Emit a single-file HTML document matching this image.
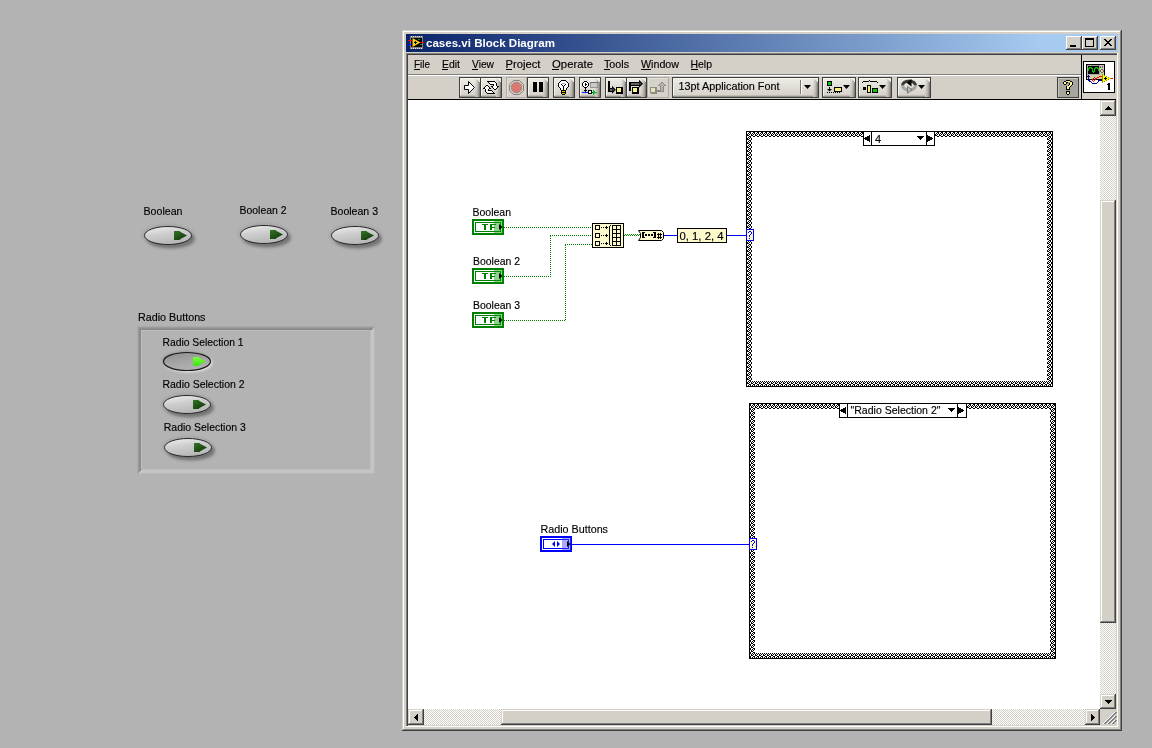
<!DOCTYPE html>
<html><head><meta charset="utf-8">
<style>
html,body{margin:0;padding:0;}
body{width:1152px;height:748px;overflow:hidden;background:#b3b3b3;}
svg{position:absolute;left:0;top:0;display:block;will-change:transform;}
text{font-family:"Liberation Sans",sans-serif;white-space:pre;}
</style></head><body>
<svg width="1152" height="748" viewBox="0 0 1152 748" shape-rendering="crispEdges">
<rect x="0" y="0" width="1152" height="748" fill="#b3b3b3"/>
<defs>
<linearGradient id="tg" gradientUnits="userSpaceOnUse" x1="406" x2="1040" y1="0" y2="0"><stop offset="0" stop-color="#0a246a"/><stop offset="1" stop-color="#a6caf0"/></linearGradient>
<pattern id="chk" x="0" y="0" width="2" height="2" patternUnits="userSpaceOnUse"><rect width="2" height="2" fill="#fff"/><rect width="1" height="1" fill="#d4d0c8"/><rect x="1" y="1" width="1" height="1" fill="#d4d0c8"/></pattern>
<linearGradient id="btng" x1="0" x2="0" y1="0" y2="1"><stop offset="0" stop-color="#eeece6"/><stop offset="0.5" stop-color="#e0ddd6"/><stop offset="1" stop-color="#d4d0c8"/></linearGradient>
</defs>
<rect x="402" y="30" width="720" height="701" fill="#d4d0c8" />
<rect x="403" y="31" width="717" height="1" fill="#fff" />
<rect x="403" y="31" width="1" height="698" fill="#fff" />
<rect x="1120" y="31" width="1" height="699" fill="#808080" />
<rect x="403" y="729" width="718" height="1" fill="#808080" />
<rect x="1121" y="30" width="1" height="701" fill="#404040" />
<rect x="402" y="730" width="720" height="1" fill="#404040" />
<rect x="406" y="34" width="712" height="18" fill="url(#tg)" />
<text x="426" y="47" font-size="11" fill="#fff" font-weight="bold" textLength="129" lengthAdjust="spacingAndGlyphs" >cases.vi Block Diagram</text>
<rect x="1066" y="36" width="16" height="14" fill="#404040" />
<rect x="1066" y="36" width="15" height="13" fill="#fff" />
<rect x="1067" y="37" width="14" height="12" fill="#808080" />
<rect x="1067" y="37" width="13" height="11" fill="#d4d0c8" />
<rect x="1082" y="36" width="16" height="14" fill="#404040" />
<rect x="1082" y="36" width="15" height="13" fill="#fff" />
<rect x="1083" y="37" width="14" height="12" fill="#808080" />
<rect x="1083" y="37" width="13" height="11" fill="#d4d0c8" />
<rect x="1100" y="36" width="16" height="14" fill="#404040" />
<rect x="1100" y="36" width="15" height="13" fill="#fff" />
<rect x="1101" y="37" width="14" height="12" fill="#808080" />
<rect x="1101" y="37" width="13" height="11" fill="#d4d0c8" />
<rect x="1070" y="45" width="6" height="2" fill="#000" />
<rect x="1085" y="38" width="9" height="9" fill="#000" />
<rect x="1086" y="40" width="7" height="6" fill="#d4d0c8" />
<rect x="1104" y="39" width="2" height="1" fill="#000" />
<rect x="1110" y="39" width="2" height="1" fill="#000" />
<rect x="1105" y="40" width="2" height="1" fill="#000" />
<rect x="1109" y="40" width="2" height="1" fill="#000" />
<rect x="1106" y="41" width="4" height="1" fill="#000" />
<rect x="1107" y="42" width="2" height="1" fill="#000" />
<rect x="1106" y="43" width="4" height="1" fill="#000" />
<rect x="1105" y="44" width="2" height="1" fill="#000" />
<rect x="1109" y="44" width="2" height="1" fill="#000" />
<rect x="1104" y="45" width="2" height="1" fill="#000" />
<rect x="1110" y="45" width="2" height="1" fill="#000" />
<rect x="406" y="53" width="712" height="1" fill="#808080" />
<rect x="406" y="53" width="1" height="674" fill="#808080" />
<rect x="407" y="54" width="710" height="1" fill="#404040" />
<rect x="407" y="54" width="1" height="672" fill="#404040" />
<rect x="1117" y="53" width="1" height="674" fill="#fff" />
<rect x="406" y="726" width="712" height="1" fill="#fff" />
<rect x="408" y="74" width="673" height="1" fill="#808080" />
<rect x="408" y="75" width="673" height="1" fill="#fff" />
<rect x="1081" y="55" width="1" height="44" fill="#000" />
<text x="414" y="68" font-size="11" fill="#000" font-weight="normal" textLength="16" lengthAdjust="spacingAndGlyphs" stroke="#000" stroke-width="0.15" >File</text>
<text x="442" y="68" font-size="11" fill="#000" font-weight="normal" textLength="18" lengthAdjust="spacingAndGlyphs" stroke="#000" stroke-width="0.15" >Edit</text>
<text x="472" y="68" font-size="11" fill="#000" font-weight="normal" textLength="22" lengthAdjust="spacingAndGlyphs" stroke="#000" stroke-width="0.15" >View</text>
<text x="505.5" y="68" font-size="11" fill="#000" font-weight="normal" textLength="35" lengthAdjust="spacingAndGlyphs" stroke="#000" stroke-width="0.15" >Project</text>
<text x="552" y="68" font-size="11" fill="#000" font-weight="normal" textLength="41" lengthAdjust="spacingAndGlyphs" stroke="#000" stroke-width="0.15" >Operate</text>
<text x="604" y="68" font-size="11" fill="#000" font-weight="normal" textLength="25" lengthAdjust="spacingAndGlyphs" stroke="#000" stroke-width="0.15" >Tools</text>
<text x="641" y="68" font-size="11" fill="#000" font-weight="normal" textLength="38" lengthAdjust="spacingAndGlyphs" stroke="#000" stroke-width="0.15" >Window</text>
<text x="690.5" y="68" font-size="11" fill="#000" font-weight="normal" textLength="21.5" lengthAdjust="spacingAndGlyphs" stroke="#000" stroke-width="0.15" >Help</text>
<rect x="414" y="69" width="6" height="1" fill="#000" />
<rect x="442" y="69" width="6" height="1" fill="#000" />
<rect x="472" y="69" width="6" height="1" fill="#000" />
<rect x="506" y="69" width="6" height="1" fill="#000" />
<rect x="552" y="69" width="7" height="1" fill="#000" />
<rect x="604" y="69" width="6" height="1" fill="#000" />
<rect x="641" y="69" width="10" height="1" fill="#000" />
<rect x="691" y="69" width="7" height="1" fill="#000" />
<rect x="459" y="77" width="22" height="21" fill="#404040" />
<rect x="460" y="78" width="20" height="19" fill="url(#btng)" />
<rect x="460" y="78" width="19" height="1" fill="#f6f4ee" />
<rect x="460" y="78" width="1" height="18" fill="#f6f4ee" />
<rect x="475" y="78" width="1" height="19" fill="#000" opacity="0.04"/>
<rect x="476" y="79" width="1" height="18" fill="#000" opacity="0.09"/>
<rect x="477" y="80" width="1" height="17" fill="#000" opacity="0.16"/>
<rect x="478" y="81" width="1" height="16" fill="#000" opacity="0.26"/>
<rect x="479" y="82" width="1" height="15" fill="#000" opacity="0.42"/>
<rect x="460" y="95" width="15" height="1" fill="#000" opacity="0.10"/>
<rect x="460" y="96" width="15" height="1" fill="#000" opacity="0.30"/>
<rect x="480" y="77" width="22" height="21" fill="#404040" />
<rect x="481" y="78" width="20" height="19" fill="url(#btng)" />
<rect x="481" y="78" width="19" height="1" fill="#f6f4ee" />
<rect x="481" y="78" width="1" height="18" fill="#f6f4ee" />
<rect x="496" y="78" width="1" height="19" fill="#000" opacity="0.04"/>
<rect x="497" y="79" width="1" height="18" fill="#000" opacity="0.09"/>
<rect x="498" y="80" width="1" height="17" fill="#000" opacity="0.16"/>
<rect x="499" y="81" width="1" height="16" fill="#000" opacity="0.26"/>
<rect x="500" y="82" width="1" height="15" fill="#000" opacity="0.42"/>
<rect x="481" y="95" width="15" height="1" fill="#000" opacity="0.10"/>
<rect x="481" y="96" width="15" height="1" fill="#000" opacity="0.30"/>
<rect x="506" y="77" width="21" height="21" fill="#aeaaa2" />
<rect x="507" y="78" width="19" height="19" fill="#d6d2ca" />
<rect x="507" y="78" width="19" height="1" fill="#e2dfd8" />
<rect x="507" y="78" width="1" height="19" fill="#e2dfd8" />
<rect x="527" y="77" width="22" height="21" fill="#404040" />
<rect x="528" y="78" width="20" height="19" fill="url(#btng)" />
<rect x="528" y="78" width="19" height="1" fill="#f6f4ee" />
<rect x="528" y="78" width="1" height="18" fill="#f6f4ee" />
<rect x="543" y="78" width="1" height="19" fill="#000" opacity="0.04"/>
<rect x="544" y="79" width="1" height="18" fill="#000" opacity="0.09"/>
<rect x="545" y="80" width="1" height="17" fill="#000" opacity="0.16"/>
<rect x="546" y="81" width="1" height="16" fill="#000" opacity="0.26"/>
<rect x="547" y="82" width="1" height="15" fill="#000" opacity="0.42"/>
<rect x="528" y="95" width="15" height="1" fill="#000" opacity="0.10"/>
<rect x="528" y="96" width="15" height="1" fill="#000" opacity="0.30"/>
<rect x="553" y="77" width="22" height="21" fill="#404040" />
<rect x="554" y="78" width="20" height="19" fill="url(#btng)" />
<rect x="554" y="78" width="19" height="1" fill="#f6f4ee" />
<rect x="554" y="78" width="1" height="18" fill="#f6f4ee" />
<rect x="569" y="78" width="1" height="19" fill="#000" opacity="0.04"/>
<rect x="570" y="79" width="1" height="18" fill="#000" opacity="0.09"/>
<rect x="571" y="80" width="1" height="17" fill="#000" opacity="0.16"/>
<rect x="572" y="81" width="1" height="16" fill="#000" opacity="0.26"/>
<rect x="573" y="82" width="1" height="15" fill="#000" opacity="0.42"/>
<rect x="554" y="95" width="15" height="1" fill="#000" opacity="0.10"/>
<rect x="554" y="96" width="15" height="1" fill="#000" opacity="0.30"/>
<rect x="579" y="77" width="22" height="21" fill="#404040" />
<rect x="580" y="78" width="20" height="19" fill="url(#btng)" />
<rect x="580" y="78" width="19" height="1" fill="#f6f4ee" />
<rect x="580" y="78" width="1" height="18" fill="#f6f4ee" />
<rect x="595" y="78" width="1" height="19" fill="#000" opacity="0.04"/>
<rect x="596" y="79" width="1" height="18" fill="#000" opacity="0.09"/>
<rect x="597" y="80" width="1" height="17" fill="#000" opacity="0.16"/>
<rect x="598" y="81" width="1" height="16" fill="#000" opacity="0.26"/>
<rect x="599" y="82" width="1" height="15" fill="#000" opacity="0.42"/>
<rect x="580" y="95" width="15" height="1" fill="#000" opacity="0.10"/>
<rect x="580" y="96" width="15" height="1" fill="#000" opacity="0.30"/>
<rect x="605" y="77" width="22" height="21" fill="#404040" />
<rect x="606" y="78" width="20" height="19" fill="url(#btng)" />
<rect x="606" y="78" width="19" height="1" fill="#f6f4ee" />
<rect x="606" y="78" width="1" height="18" fill="#f6f4ee" />
<rect x="621" y="78" width="1" height="19" fill="#000" opacity="0.04"/>
<rect x="622" y="79" width="1" height="18" fill="#000" opacity="0.09"/>
<rect x="623" y="80" width="1" height="17" fill="#000" opacity="0.16"/>
<rect x="624" y="81" width="1" height="16" fill="#000" opacity="0.26"/>
<rect x="625" y="82" width="1" height="15" fill="#000" opacity="0.42"/>
<rect x="606" y="95" width="15" height="1" fill="#000" opacity="0.10"/>
<rect x="606" y="96" width="15" height="1" fill="#000" opacity="0.30"/>
<rect x="626" y="77" width="21" height="21" fill="#404040" />
<rect x="627" y="78" width="19" height="19" fill="url(#btng)" />
<rect x="627" y="78" width="18" height="1" fill="#f6f4ee" />
<rect x="627" y="78" width="1" height="18" fill="#f6f4ee" />
<rect x="641" y="78" width="1" height="19" fill="#000" opacity="0.04"/>
<rect x="642" y="79" width="1" height="18" fill="#000" opacity="0.09"/>
<rect x="643" y="80" width="1" height="17" fill="#000" opacity="0.16"/>
<rect x="644" y="81" width="1" height="16" fill="#000" opacity="0.26"/>
<rect x="645" y="82" width="1" height="15" fill="#000" opacity="0.42"/>
<rect x="627" y="95" width="14" height="1" fill="#000" opacity="0.10"/>
<rect x="627" y="96" width="14" height="1" fill="#000" opacity="0.30"/>
<rect x="647" y="77" width="22" height="21" fill="#aeaaa2" />
<rect x="648" y="78" width="20" height="19" fill="#d6d2ca" />
<rect x="648" y="78" width="20" height="1" fill="#e2dfd8" />
<rect x="648" y="78" width="1" height="19" fill="#e2dfd8" />
<rect x="672" y="77" width="147" height="21" fill="#404040" />
<rect x="673" y="78" width="145" height="19" fill="url(#btng)" />
<rect x="673" y="78" width="144" height="1" fill="#f6f4ee" />
<rect x="673" y="78" width="1" height="18" fill="#f6f4ee" />
<rect x="813" y="78" width="1" height="19" fill="#000" opacity="0.04"/>
<rect x="814" y="79" width="1" height="18" fill="#000" opacity="0.09"/>
<rect x="815" y="80" width="1" height="17" fill="#000" opacity="0.16"/>
<rect x="816" y="81" width="1" height="16" fill="#000" opacity="0.26"/>
<rect x="817" y="82" width="1" height="15" fill="#000" opacity="0.42"/>
<rect x="673" y="95" width="140" height="1" fill="#000" opacity="0.10"/>
<rect x="673" y="96" width="140" height="1" fill="#000" opacity="0.30"/>
<rect x="822" y="77" width="34" height="21" fill="#404040" />
<rect x="823" y="78" width="32" height="19" fill="url(#btng)" />
<rect x="823" y="78" width="31" height="1" fill="#f6f4ee" />
<rect x="823" y="78" width="1" height="18" fill="#f6f4ee" />
<rect x="850" y="78" width="1" height="19" fill="#000" opacity="0.04"/>
<rect x="851" y="79" width="1" height="18" fill="#000" opacity="0.09"/>
<rect x="852" y="80" width="1" height="17" fill="#000" opacity="0.16"/>
<rect x="853" y="81" width="1" height="16" fill="#000" opacity="0.26"/>
<rect x="854" y="82" width="1" height="15" fill="#000" opacity="0.42"/>
<rect x="823" y="95" width="27" height="1" fill="#000" opacity="0.10"/>
<rect x="823" y="96" width="27" height="1" fill="#000" opacity="0.30"/>
<rect x="858" y="77" width="34" height="21" fill="#404040" />
<rect x="859" y="78" width="32" height="19" fill="url(#btng)" />
<rect x="859" y="78" width="31" height="1" fill="#f6f4ee" />
<rect x="859" y="78" width="1" height="18" fill="#f6f4ee" />
<rect x="886" y="78" width="1" height="19" fill="#000" opacity="0.04"/>
<rect x="887" y="79" width="1" height="18" fill="#000" opacity="0.09"/>
<rect x="888" y="80" width="1" height="17" fill="#000" opacity="0.16"/>
<rect x="889" y="81" width="1" height="16" fill="#000" opacity="0.26"/>
<rect x="890" y="82" width="1" height="15" fill="#000" opacity="0.42"/>
<rect x="859" y="95" width="27" height="1" fill="#000" opacity="0.10"/>
<rect x="859" y="96" width="27" height="1" fill="#000" opacity="0.30"/>
<rect x="897" y="77" width="34" height="21" fill="#404040" />
<rect x="898" y="78" width="32" height="19" fill="url(#btng)" />
<rect x="898" y="78" width="31" height="1" fill="#f6f4ee" />
<rect x="898" y="78" width="1" height="18" fill="#f6f4ee" />
<rect x="925" y="78" width="1" height="19" fill="#000" opacity="0.04"/>
<rect x="926" y="79" width="1" height="18" fill="#000" opacity="0.09"/>
<rect x="927" y="80" width="1" height="17" fill="#000" opacity="0.16"/>
<rect x="928" y="81" width="1" height="16" fill="#000" opacity="0.26"/>
<rect x="929" y="82" width="1" height="15" fill="#000" opacity="0.42"/>
<rect x="898" y="95" width="27" height="1" fill="#000" opacity="0.10"/>
<rect x="898" y="96" width="27" height="1" fill="#000" opacity="0.30"/>
<text x="678.5" y="90" font-size="11" fill="#000" font-weight="normal" textLength="101" lengthAdjust="spacingAndGlyphs" stroke="#000" stroke-width="0.15" >13pt Application Font</text>
<rect x="800" y="80" width="1" height="14" fill="#7a7770" />
<rect x="801" y="80" width="1" height="14" fill="#fff" />
<path d="M804,85 h7 l-3.5,4 z" fill="#000" stroke="none" stroke-width="1" shape-rendering="geometricPrecision"/>
<rect x="1057" y="77" width="22" height="21" fill="#404040" />
<rect x="1058" y="78" width="20" height="19" fill="#a8a5a0" />
<rect x="1058" y="78" width="20" height="1" fill="#c8c5c0" />
<rect x="1058" y="78" width="1" height="19" fill="#c8c5c0" />
<rect x="1083" y="61" width="32" height="32" fill="#000" />
<rect x="1084" y="62" width="30" height="30" fill="#fff" />
<rect x="408" y="100" width="692" height="609" fill="#fff" />
<rect x="408" y="99" width="708" height="1" fill="#000" />
<rect x="1100" y="100" width="16" height="609" fill="url(#chk)" />
<rect x="408" y="709" width="692" height="16" fill="url(#chk)" />
<rect x="1100" y="709" width="16" height="16" fill="#d4d0c8" />
<rect x="1100" y="100" width="16" height="16" fill="#404040" />
<rect x="1100" y="100" width="15" height="15" fill="#d4d0c8" />
<rect x="1101" y="101" width="14" height="14" fill="#808080" />
<rect x="1101" y="101" width="13" height="13" fill="#fff" />
<rect x="1102" y="102" width="12" height="12" fill="#d4d0c8" />
<rect x="1100" y="694" width="16" height="15" fill="#404040" />
<rect x="1100" y="694" width="15" height="14" fill="#d4d0c8" />
<rect x="1101" y="695" width="14" height="13" fill="#808080" />
<rect x="1101" y="695" width="13" height="12" fill="#fff" />
<rect x="1102" y="696" width="12" height="11" fill="#d4d0c8" />
<rect x="408" y="709" width="16" height="16" fill="#404040" />
<rect x="408" y="709" width="15" height="15" fill="#d4d0c8" />
<rect x="409" y="710" width="14" height="14" fill="#808080" />
<rect x="409" y="710" width="13" height="13" fill="#fff" />
<rect x="410" y="711" width="12" height="12" fill="#d4d0c8" />
<rect x="1085" y="709" width="15" height="16" fill="#404040" />
<rect x="1085" y="709" width="14" height="15" fill="#d4d0c8" />
<rect x="1086" y="710" width="13" height="14" fill="#808080" />
<rect x="1086" y="710" width="12" height="13" fill="#fff" />
<rect x="1087" y="711" width="11" height="12" fill="#d4d0c8" />
<rect x="1100" y="200" width="16" height="423" fill="#404040" />
<rect x="1100" y="200" width="15" height="422" fill="#d4d0c8" />
<rect x="1101" y="201" width="14" height="421" fill="#808080" />
<rect x="1101" y="201" width="13" height="420" fill="#fff" />
<rect x="1102" y="202" width="12" height="419" fill="#d4d0c8" />
<rect x="501" y="709" width="491" height="16" fill="#404040" />
<rect x="501" y="709" width="490" height="15" fill="#d4d0c8" />
<rect x="502" y="710" width="489" height="14" fill="#808080" />
<rect x="502" y="710" width="488" height="13" fill="#fff" />
<rect x="503" y="711" width="487" height="12" fill="#d4d0c8" />
<rect x="1108" y="106" width="1" height="1" fill="#000" />
<rect x="1108" y="703" width="1" height="1" fill="#000" />
<rect x="414" y="717" width="1" height="1" fill="#000" />
<rect x="1094" y="717" width="1" height="1" fill="#000" />
<rect x="1107" y="107" width="3" height="1" fill="#000" />
<rect x="1107" y="702" width="3" height="1" fill="#000" />
<rect x="415" y="716" width="1" height="3" fill="#000" />
<rect x="1093" y="716" width="1" height="3" fill="#000" />
<rect x="1106" y="108" width="5" height="1" fill="#000" />
<rect x="1106" y="701" width="5" height="1" fill="#000" />
<rect x="416" y="715" width="1" height="5" fill="#000" />
<rect x="1092" y="715" width="1" height="5" fill="#000" />
<rect x="1105" y="109" width="7" height="1" fill="#000" />
<rect x="1105" y="700" width="7" height="1" fill="#000" />
<rect x="417" y="714" width="1" height="7" fill="#000" />
<rect x="1091" y="714" width="1" height="7" fill="#000" />
<rect x="1111" y="723" width="1" height="1" fill="#fff" />
<rect x="1112" y="723" width="1" height="1" fill="#808080" />
<rect x="1113" y="723" width="1" height="1" fill="#808080" />
<rect x="1112" y="722" width="1" height="1" fill="#fff" />
<rect x="1113" y="722" width="1" height="1" fill="#808080" />
<rect x="1114" y="722" width="1" height="1" fill="#808080" />
<rect x="1113" y="721" width="1" height="1" fill="#fff" />
<rect x="1114" y="721" width="1" height="1" fill="#808080" />
<rect x="1115" y="721" width="1" height="1" fill="#808080" />
<rect x="1114" y="720" width="1" height="1" fill="#fff" />
<rect x="1115" y="720" width="1" height="1" fill="#808080" />
<rect x="1116" y="720" width="1" height="1" fill="#808080" />
<rect x="1107" y="723" width="1" height="1" fill="#fff" />
<rect x="1108" y="723" width="1" height="1" fill="#808080" />
<rect x="1109" y="723" width="1" height="1" fill="#808080" />
<rect x="1108" y="722" width="1" height="1" fill="#fff" />
<rect x="1109" y="722" width="1" height="1" fill="#808080" />
<rect x="1110" y="722" width="1" height="1" fill="#808080" />
<rect x="1109" y="721" width="1" height="1" fill="#fff" />
<rect x="1110" y="721" width="1" height="1" fill="#808080" />
<rect x="1111" y="721" width="1" height="1" fill="#808080" />
<rect x="1110" y="720" width="1" height="1" fill="#fff" />
<rect x="1111" y="720" width="1" height="1" fill="#808080" />
<rect x="1112" y="720" width="1" height="1" fill="#808080" />
<rect x="1111" y="719" width="1" height="1" fill="#fff" />
<rect x="1112" y="719" width="1" height="1" fill="#808080" />
<rect x="1113" y="719" width="1" height="1" fill="#808080" />
<rect x="1112" y="718" width="1" height="1" fill="#fff" />
<rect x="1113" y="718" width="1" height="1" fill="#808080" />
<rect x="1114" y="718" width="1" height="1" fill="#808080" />
<rect x="1113" y="717" width="1" height="1" fill="#fff" />
<rect x="1114" y="717" width="1" height="1" fill="#808080" />
<rect x="1115" y="717" width="1" height="1" fill="#808080" />
<rect x="1114" y="716" width="1" height="1" fill="#fff" />
<rect x="1115" y="716" width="1" height="1" fill="#808080" />
<rect x="1116" y="716" width="1" height="1" fill="#808080" />
<rect x="1103" y="723" width="1" height="1" fill="#fff" />
<rect x="1104" y="723" width="1" height="1" fill="#808080" />
<rect x="1105" y="723" width="1" height="1" fill="#808080" />
<rect x="1104" y="722" width="1" height="1" fill="#fff" />
<rect x="1105" y="722" width="1" height="1" fill="#808080" />
<rect x="1106" y="722" width="1" height="1" fill="#808080" />
<rect x="1105" y="721" width="1" height="1" fill="#fff" />
<rect x="1106" y="721" width="1" height="1" fill="#808080" />
<rect x="1107" y="721" width="1" height="1" fill="#808080" />
<rect x="1106" y="720" width="1" height="1" fill="#fff" />
<rect x="1107" y="720" width="1" height="1" fill="#808080" />
<rect x="1108" y="720" width="1" height="1" fill="#808080" />
<rect x="1107" y="719" width="1" height="1" fill="#fff" />
<rect x="1108" y="719" width="1" height="1" fill="#808080" />
<rect x="1109" y="719" width="1" height="1" fill="#808080" />
<rect x="1108" y="718" width="1" height="1" fill="#fff" />
<rect x="1109" y="718" width="1" height="1" fill="#808080" />
<rect x="1110" y="718" width="1" height="1" fill="#808080" />
<rect x="1109" y="717" width="1" height="1" fill="#fff" />
<rect x="1110" y="717" width="1" height="1" fill="#808080" />
<rect x="1111" y="717" width="1" height="1" fill="#808080" />
<rect x="1110" y="716" width="1" height="1" fill="#fff" />
<rect x="1111" y="716" width="1" height="1" fill="#808080" />
<rect x="1112" y="716" width="1" height="1" fill="#808080" />
<rect x="1111" y="715" width="1" height="1" fill="#fff" />
<rect x="1112" y="715" width="1" height="1" fill="#808080" />
<rect x="1113" y="715" width="1" height="1" fill="#808080" />
<rect x="1112" y="714" width="1" height="1" fill="#fff" />
<rect x="1113" y="714" width="1" height="1" fill="#808080" />
<rect x="1114" y="714" width="1" height="1" fill="#808080" />
<rect x="1113" y="713" width="1" height="1" fill="#fff" />
<rect x="1114" y="713" width="1" height="1" fill="#808080" />
<rect x="1115" y="713" width="1" height="1" fill="#808080" />
<rect x="1114" y="712" width="1" height="1" fill="#fff" />
<rect x="1115" y="712" width="1" height="1" fill="#808080" />
<rect x="1116" y="712" width="1" height="1" fill="#808080" />
<path d="M464.5,85.5 H468.5 V81.5 L474.5,87.5 L468.5,93.5 V89.5 H464.5 Z" fill="#fff" stroke="#000" stroke-width="1" shape-rendering="geometricPrecision"/>
<rect x="487" y="81" width="8" height="1" fill="#000" />
<rect x="488" y="82" width="1" height="1" fill="#000" />
<rect x="489" y="82" width="6" height="1" fill="#fff" />
<rect x="495" y="82" width="1" height="1" fill="#000" />
<rect x="489" y="83" width="1" height="1" fill="#000" />
<rect x="490" y="83" width="6" height="1" fill="#fff" />
<rect x="496" y="83" width="1" height="1" fill="#000" />
<rect x="490" y="84" width="4" height="1" fill="#000" />
<rect x="494" y="84" width="2" height="1" fill="#fff" />
<rect x="496" y="84" width="1" height="1" fill="#000" />
<rect x="493" y="85" width="1" height="1" fill="#000" />
<rect x="494" y="85" width="2" height="1" fill="#fff" />
<rect x="496" y="85" width="1" height="1" fill="#000" />
<rect x="491" y="86" width="2" height="1" fill="#000" />
<rect x="493" y="86" width="4" height="1" fill="#fff" />
<rect x="497" y="86" width="2" height="1" fill="#000" />
<rect x="492" y="87" width="1" height="1" fill="#000" />
<rect x="493" y="87" width="4" height="1" fill="#fff" />
<rect x="497" y="87" width="1" height="1" fill="#000" />
<rect x="493" y="88" width="1" height="1" fill="#000" />
<rect x="494" y="88" width="2" height="1" fill="#fff" />
<rect x="496" y="88" width="1" height="1" fill="#000" />
<rect x="494" y="89" width="2" height="1" fill="#000" />
<rect x="486" y="85" width="2" height="1" fill="#000" />
<rect x="485" y="86" width="1" height="1" fill="#000" />
<rect x="486" y="86" width="2" height="1" fill="#fff" />
<rect x="488" y="86" width="1" height="1" fill="#000" />
<rect x="484" y="87" width="1" height="1" fill="#000" />
<rect x="485" y="87" width="4" height="1" fill="#fff" />
<rect x="489" y="87" width="1" height="1" fill="#000" />
<rect x="483" y="88" width="2" height="1" fill="#000" />
<rect x="485" y="88" width="4" height="1" fill="#fff" />
<rect x="489" y="88" width="2" height="1" fill="#000" />
<rect x="485" y="89" width="1" height="1" fill="#000" />
<rect x="486" y="89" width="2" height="1" fill="#fff" />
<rect x="488" y="89" width="1" height="1" fill="#000" />
<rect x="485" y="90" width="1" height="1" fill="#000" />
<rect x="486" y="90" width="2" height="1" fill="#fff" />
<rect x="488" y="90" width="4" height="1" fill="#000" />
<rect x="485" y="91" width="1" height="1" fill="#000" />
<rect x="486" y="91" width="6" height="1" fill="#fff" />
<rect x="492" y="91" width="1" height="1" fill="#000" />
<rect x="486" y="92" width="1" height="1" fill="#000" />
<rect x="487" y="92" width="6" height="1" fill="#fff" />
<rect x="493" y="92" width="1" height="1" fill="#000" />
<rect x="487" y="93" width="8" height="1" fill="#000" />
<path d="M523.52,90.41 L519.41,94.52 L513.59,94.52 L509.48,90.41 L509.48,84.59 L513.59,80.48 L519.41,80.48 L523.52,84.59 Z" fill="none" stroke="#84827c" stroke-width="1" shape-rendering="geometricPrecision"/>
<path d="M521.67,89.64 L518.64,92.67 L514.36,92.67 L511.33,89.64 L511.33,85.36 L514.36,82.33 L518.64,82.33 L521.67,85.36 Z" fill="#dc7874" stroke="#8a8a84" stroke-width="0.8" shape-rendering="geometricPrecision"/>
<rect x="533" y="82" width="4" height="10" fill="#000" />
<rect x="539" y="82" width="4" height="10" fill="#000" />
<rect x="561" y="80" width="5" height="1" fill="#000" />
<rect x="560" y="81" width="1" height="1" fill="#000" />
<rect x="561" y="81" width="5" height="1" fill="#fff" />
<rect x="566" y="81" width="1" height="1" fill="#000" />
<rect x="559" y="82" width="1" height="1" fill="#000" />
<rect x="560" y="82" width="7" height="1" fill="#fff" />
<rect x="567" y="82" width="1" height="1" fill="#000" />
<rect x="558" y="83" width="1" height="1" fill="#000" />
<rect x="559" y="83" width="3" height="1" fill="#fff" />
<rect x="562" y="83" width="3" height="1" fill="#b0b0b0" />
<rect x="565" y="83" width="3" height="1" fill="#fff" />
<rect x="568" y="83" width="1" height="1" fill="#000" />
<rect x="558" y="84" width="1" height="1" fill="#000" />
<rect x="559" y="84" width="2" height="1" fill="#fff" />
<rect x="561" y="84" width="1" height="1" fill="#000" />
<rect x="562" y="84" width="3" height="1" fill="#fff" />
<rect x="565" y="84" width="1" height="1" fill="#000" />
<rect x="566" y="84" width="2" height="1" fill="#fff" />
<rect x="568" y="84" width="1" height="1" fill="#000" />
<rect x="558" y="85" width="1" height="1" fill="#000" />
<rect x="559" y="85" width="3" height="1" fill="#fff" />
<rect x="562" y="85" width="1" height="1" fill="#000" />
<rect x="563" y="85" width="1" height="1" fill="#fff" />
<rect x="564" y="85" width="1" height="1" fill="#000" />
<rect x="565" y="85" width="3" height="1" fill="#fff" />
<rect x="568" y="85" width="1" height="1" fill="#000" />
<rect x="558" y="86" width="1" height="1" fill="#000" />
<rect x="559" y="86" width="4" height="1" fill="#fff" />
<rect x="563" y="86" width="1" height="1" fill="#000" />
<rect x="564" y="86" width="4" height="1" fill="#fff" />
<rect x="568" y="86" width="1" height="1" fill="#000" />
<rect x="559" y="87" width="1" height="1" fill="#000" />
<rect x="560" y="87" width="3" height="1" fill="#fff" />
<rect x="563" y="87" width="1" height="1" fill="#000" />
<rect x="564" y="87" width="3" height="1" fill="#fff" />
<rect x="567" y="87" width="1" height="1" fill="#000" />
<rect x="560" y="88" width="1" height="1" fill="#000" />
<rect x="561" y="88" width="2" height="1" fill="#fff" />
<rect x="563" y="88" width="1" height="1" fill="#000" />
<rect x="564" y="88" width="2" height="1" fill="#fff" />
<rect x="566" y="88" width="1" height="1" fill="#000" />
<rect x="560" y="89" width="1" height="1" fill="#000" />
<rect x="561" y="89" width="2" height="1" fill="#fff" />
<rect x="563" y="89" width="1" height="1" fill="#000" />
<rect x="564" y="89" width="2" height="1" fill="#fff" />
<rect x="566" y="89" width="1" height="1" fill="#000" />
<rect x="561" y="90" width="5" height="1" fill="#000" />
<rect x="561" y="91" width="1" height="1" fill="#000" />
<rect x="562" y="91" width="3" height="1" fill="#f0c000" />
<rect x="565" y="91" width="1" height="1" fill="#000" />
<rect x="561" y="92" width="5" height="1" fill="#000" />
<rect x="561" y="93" width="1" height="1" fill="#000" />
<rect x="562" y="93" width="3" height="1" fill="#f0c000" />
<rect x="565" y="93" width="1" height="1" fill="#000" />
<rect x="562" y="94" width="3" height="1" fill="#000" />
<rect x="584" y="81" width="3" height="1" fill="#000" />
<rect x="583" y="82" width="1" height="1" fill="#000" />
<rect x="584" y="82" width="3" height="1" fill="#fff" />
<rect x="587" y="82" width="1" height="1" fill="#000" />
<rect x="590" y="82" width="8" height="1" fill="#6c6c6c" />
<rect x="582" y="83" width="1" height="1" fill="#000" />
<rect x="583" y="83" width="2" height="1" fill="#fff" />
<rect x="585" y="83" width="1" height="1" fill="#000" />
<rect x="586" y="83" width="2" height="1" fill="#fff" />
<rect x="588" y="83" width="1" height="1" fill="#000" />
<rect x="590" y="83" width="1" height="1" fill="#949494" />
<rect x="591" y="83" width="6" height="1" fill="#cacaca" />
<rect x="597" y="83" width="1" height="1" fill="#949494" />
<rect x="582" y="84" width="1" height="1" fill="#000" />
<rect x="583" y="84" width="2" height="1" fill="#fff" />
<rect x="585" y="84" width="2" height="1" fill="#000" />
<rect x="587" y="84" width="1" height="1" fill="#fff" />
<rect x="588" y="84" width="1" height="1" fill="#000" />
<rect x="590" y="84" width="1" height="1" fill="#949494" />
<rect x="591" y="84" width="6" height="1" fill="#cacaca" />
<rect x="597" y="84" width="1" height="1" fill="#949494" />
<rect x="582" y="85" width="1" height="1" fill="#000" />
<rect x="583" y="85" width="2" height="1" fill="#fff" />
<rect x="585" y="85" width="1" height="1" fill="#000" />
<rect x="586" y="85" width="2" height="1" fill="#fff" />
<rect x="588" y="85" width="1" height="1" fill="#000" />
<rect x="590" y="85" width="1" height="1" fill="#949494" />
<rect x="591" y="85" width="6" height="1" fill="#cacaca" />
<rect x="597" y="85" width="1" height="1" fill="#949494" />
<rect x="583" y="86" width="1" height="1" fill="#000" />
<rect x="584" y="86" width="3" height="1" fill="#fff" />
<rect x="587" y="86" width="1" height="1" fill="#000" />
<rect x="590" y="86" width="1" height="1" fill="#949494" />
<rect x="591" y="86" width="6" height="1" fill="#cacaca" />
<rect x="597" y="86" width="1" height="1" fill="#949494" />
<rect x="584" y="87" width="3" height="1" fill="#000" />
<rect x="590" y="87" width="8" height="1" fill="#949494" />
<rect x="585" y="88" width="1" height="1" fill="#000" />
<rect x="585" y="89" width="1" height="1" fill="#000" />
<rect x="584" y="90" width="3" height="1" fill="#000" />
<rect x="588" y="90" width="4" height="1" fill="#000" />
<rect x="593" y="90" width="1" height="1" fill="#10c010" />
<rect x="585" y="91" width="1" height="1" fill="#000" />
<rect x="588" y="91" width="1" height="1" fill="#000" />
<rect x="589" y="91" width="2" height="1" fill="#fff" />
<rect x="591" y="91" width="1" height="1" fill="#000" />
<rect x="593" y="91" width="2" height="1" fill="#10c010" />
<rect x="582" y="92" width="6" height="1" fill="#0028ff" />
<rect x="588" y="92" width="1" height="1" fill="#000" />
<rect x="589" y="92" width="2" height="1" fill="#fff" />
<rect x="591" y="92" width="1" height="1" fill="#000" />
<rect x="592" y="92" width="1" height="1" fill="#0028ff" />
<rect x="593" y="92" width="4" height="1" fill="#10c010" />
<rect x="588" y="93" width="4" height="1" fill="#000" />
<rect x="593" y="93" width="2" height="1" fill="#10c010" />
<rect x="593" y="94" width="1" height="1" fill="#10c010" />
<rect x="608" y="81" width="2" height="10" fill="#000" />
<rect x="608" y="88" width="5" height="4" fill="#000" />
<rect x="610" y="89" width="3" height="2" fill="#606060" />
<path d="M612,85.8 L615.8,89.8 L612,93.8 Z" fill="#000" stroke="none" stroke-width="1" shape-rendering="geometricPrecision"/>
<path d="M612.5,88.3 L614.2,89.8 L612.5,91.3 Z" fill="#606060" stroke="none" stroke-width="1" shape-rendering="geometricPrecision"/>
<rect x="616" y="87" width="7" height="7" fill="#000" />
<rect x="617" y="88" width="4" height="4" fill="#f8f490" />
<rect x="629" y="82" width="11" height="4" fill="#000" />
<rect x="631" y="83" width="9" height="2" fill="#606060" />
<rect x="629" y="82" width="2" height="9" fill="#000" />
<path d="M639,79.8 L643,83.8 L639,87.8 Z" fill="#000" stroke="none" stroke-width="1" shape-rendering="geometricPrecision"/>
<path d="M639.5,82.3 L641.2,83.8 L639.5,85.3 Z" fill="#606060" stroke="none" stroke-width="1" shape-rendering="geometricPrecision"/>
<rect x="632" y="87" width="7" height="7" fill="#000" />
<rect x="633" y="88" width="4" height="4" fill="#f8f490" />
<rect x="661" y="82" width="2" height="1" fill="#8e8c86" />
<rect x="660" y="83" width="1" height="1" fill="#8e8c86" />
<rect x="661" y="83" width="2" height="1" fill="#b4b2ac" />
<rect x="663" y="83" width="1" height="1" fill="#8e8c86" />
<rect x="659" y="84" width="1" height="1" fill="#8e8c86" />
<rect x="660" y="84" width="4" height="1" fill="#b4b2ac" />
<rect x="664" y="84" width="1" height="1" fill="#8e8c86" />
<rect x="658" y="85" width="2" height="1" fill="#8e8c86" />
<rect x="660" y="85" width="4" height="1" fill="#b4b2ac" />
<rect x="664" y="85" width="2" height="1" fill="#8e8c86" />
<rect x="660" y="86" width="1" height="1" fill="#8e8c86" />
<rect x="661" y="86" width="2" height="1" fill="#b4b2ac" />
<rect x="663" y="86" width="1" height="1" fill="#8e8c86" />
<rect x="650" y="87" width="7" height="1" fill="#8e8c86" />
<rect x="660" y="87" width="1" height="1" fill="#8e8c86" />
<rect x="661" y="87" width="2" height="1" fill="#b4b2ac" />
<rect x="663" y="87" width="1" height="1" fill="#8e8c86" />
<rect x="650" y="88" width="1" height="1" fill="#8e8c86" />
<rect x="651" y="88" width="4" height="1" fill="#e6e2b4" />
<rect x="655" y="88" width="2" height="1" fill="#8e8c86" />
<rect x="660" y="88" width="1" height="1" fill="#8e8c86" />
<rect x="661" y="88" width="2" height="1" fill="#b4b2ac" />
<rect x="663" y="88" width="1" height="1" fill="#8e8c86" />
<rect x="650" y="89" width="1" height="1" fill="#8e8c86" />
<rect x="651" y="89" width="4" height="1" fill="#e6e2b4" />
<rect x="655" y="89" width="2" height="1" fill="#8e8c86" />
<rect x="660" y="89" width="1" height="1" fill="#8e8c86" />
<rect x="661" y="89" width="2" height="1" fill="#b4b2ac" />
<rect x="663" y="89" width="1" height="1" fill="#8e8c86" />
<rect x="650" y="90" width="1" height="1" fill="#8e8c86" />
<rect x="651" y="90" width="4" height="1" fill="#e6e2b4" />
<rect x="655" y="90" width="6" height="1" fill="#8e8c86" />
<rect x="661" y="90" width="2" height="1" fill="#b4b2ac" />
<rect x="663" y="90" width="1" height="1" fill="#8e8c86" />
<rect x="650" y="91" width="1" height="1" fill="#8e8c86" />
<rect x="651" y="91" width="4" height="1" fill="#e6e2b4" />
<rect x="655" y="91" width="9" height="1" fill="#8e8c86" />
<rect x="650" y="92" width="7" height="1" fill="#8e8c86" />
<rect x="651" y="93" width="6" height="1" fill="#8e8c86" />
<rect x="827" y="81" width="5" height="5" fill="#000" />
<rect x="828" y="82" width="3" height="3" fill="#00c800" />
<rect x="829" y="87" width="1" height="4" fill="#000" />
<path d="M827,89 h5 l-2.5,2.5 z" fill="#000" stroke="none" stroke-width="1" shape-rendering="geometricPrecision"/>
<rect x="827" y="92" width="1" height="1" fill="#000" />
<rect x="829" y="92" width="1" height="1" fill="#000" />
<rect x="831" y="92" width="1" height="1" fill="#000" />
<rect x="833" y="92" width="1" height="1" fill="#000" />
<rect x="835" y="92" width="1" height="1" fill="#000" />
<rect x="837" y="92" width="1" height="1" fill="#000" />
<rect x="839" y="92" width="1" height="1" fill="#000" />
<rect x="834" y="87" width="8" height="5" fill="#000" />
<rect x="835" y="88" width="6" height="3" fill="#f8f080" />
<path d="M843,85 h7 l-3.5,4 z" fill="#000" stroke="none" stroke-width="1" shape-rendering="geometricPrecision"/>
<rect x="869" y="80" width="1" height="1" fill="#000" />
<rect x="863" y="81" width="6" height="1" fill="#000" />
<rect x="870" y="81" width="7" height="1" fill="#000" />
<rect x="862" y="82" width="1" height="1" fill="#000" />
<rect x="877" y="82" width="1" height="1" fill="#000" />
<rect x="863" y="87" width="3" height="3" fill="#000" />
<rect x="867" y="85" width="4" height="8" fill="#000" />
<rect x="868" y="86" width="2" height="6" fill="#f8f080" />
<rect x="872" y="88" width="6" height="5" fill="#000" />
<rect x="873" y="89" width="4" height="3" fill="#00c800" />
<path d="M879,85 h7 l-3.5,4 z" fill="#000" stroke="none" stroke-width="1" shape-rendering="geometricPrecision"/>
<path d="M902.5,85.5 A6.5,4.6 0 0 1 915.5,85.5" fill="none" stroke="#3a3a3a" stroke-width="3" shape-rendering="geometricPrecision"/>
<path d="M915.5,85.5 A6.5,4.6 0 0 1 902.5,85.5" fill="none" stroke="#a4a4a4" stroke-width="3" shape-rendering="geometricPrecision"/>
<path d="M906.5,82.8 L911.5,79 L911.5,86.6 Z" fill="#000" stroke="none" stroke-width="1" shape-rendering="geometricPrecision"/>
<path d="M912,89.8 L907.5,86.3 L907.5,93.3 Z" fill="#b8b8b8" stroke="#606060" stroke-width="0.7" shape-rendering="geometricPrecision"/>
<path d="M918,85 h7 l-3.5,4 z" fill="#000" stroke="none" stroke-width="1" shape-rendering="geometricPrecision"/>
<rect x="1066" y="80" width="4" height="1" fill="#000" />
<rect x="1064" y="81" width="2" height="1" fill="#000" />
<rect x="1066" y="81" width="4" height="1" fill="#ffff99" />
<rect x="1070" y="81" width="2" height="1" fill="#000" />
<rect x="1063" y="82" width="1" height="1" fill="#000" />
<rect x="1064" y="82" width="2" height="1" fill="#ffff99" />
<rect x="1066" y="82" width="2" height="1" fill="#000" />
<rect x="1070" y="82" width="2" height="1" fill="#ffff99" />
<rect x="1072" y="82" width="1" height="1" fill="#000" />
<rect x="1063" y="83" width="1" height="1" fill="#000" />
<rect x="1064" y="83" width="2" height="1" fill="#ffff99" />
<rect x="1066" y="83" width="1" height="1" fill="#000" />
<rect x="1069" y="83" width="1" height="1" fill="#000" />
<rect x="1070" y="83" width="2" height="1" fill="#ffff99" />
<rect x="1072" y="83" width="1" height="1" fill="#000" />
<rect x="1064" y="84" width="2" height="1" fill="#000" />
<rect x="1069" y="84" width="1" height="1" fill="#000" />
<rect x="1070" y="84" width="2" height="1" fill="#ffff99" />
<rect x="1072" y="84" width="1" height="1" fill="#000" />
<rect x="1068" y="85" width="1" height="1" fill="#000" />
<rect x="1069" y="85" width="2" height="1" fill="#ffff99" />
<rect x="1071" y="85" width="1" height="1" fill="#000" />
<rect x="1066" y="86" width="1" height="1" fill="#000" />
<rect x="1067" y="86" width="3" height="1" fill="#ffff99" />
<rect x="1070" y="86" width="1" height="1" fill="#000" />
<rect x="1066" y="87" width="1" height="1" fill="#000" />
<rect x="1067" y="87" width="2" height="1" fill="#ffff99" />
<rect x="1069" y="87" width="1" height="1" fill="#000" />
<rect x="1066" y="88" width="1" height="1" fill="#000" />
<rect x="1067" y="88" width="2" height="1" fill="#ffff99" />
<rect x="1069" y="88" width="1" height="1" fill="#000" />
<rect x="1066" y="89" width="4" height="1" fill="#000" />
<rect x="1066" y="91" width="4" height="1" fill="#000" />
<rect x="1066" y="92" width="1" height="1" fill="#000" />
<rect x="1067" y="92" width="2" height="1" fill="#ffff99" />
<rect x="1069" y="92" width="1" height="1" fill="#000" />
<rect x="1066" y="93" width="1" height="1" fill="#000" />
<rect x="1067" y="93" width="2" height="1" fill="#ffff99" />
<rect x="1069" y="93" width="1" height="1" fill="#000" />
<rect x="1067" y="94" width="2" height="1" fill="#000" />
<rect x="1086" y="64" width="19" height="1" fill="#000" />
<rect x="1086" y="65" width="1" height="1" fill="#000" />
<rect x="1087" y="65" width="13" height="1" fill="#a8a8a8" />
<rect x="1100" y="65" width="4" height="1" fill="#d4d2a8" />
<rect x="1104" y="65" width="1" height="1" fill="#000" />
<rect x="1086" y="66" width="1" height="1" fill="#000" />
<rect x="1087" y="66" width="1" height="1" fill="#a8a8a8" />
<rect x="1088" y="66" width="11" height="1" fill="#000" />
<rect x="1099" y="66" width="1" height="1" fill="#a8a8a8" />
<rect x="1100" y="66" width="1" height="1" fill="#686868" />
<rect x="1101" y="66" width="1" height="1" fill="#d4d2a8" />
<rect x="1102" y="66" width="1" height="1" fill="#686868" />
<rect x="1103" y="66" width="1" height="1" fill="#d4d2a8" />
<rect x="1104" y="66" width="1" height="1" fill="#000" />
<rect x="1086" y="67" width="1" height="1" fill="#000" />
<rect x="1087" y="67" width="1" height="1" fill="#a8a8a8" />
<rect x="1088" y="67" width="1" height="1" fill="#000" />
<rect x="1089" y="67" width="3" height="1" fill="#00c000" />
<rect x="1092" y="67" width="3" height="1" fill="#000" />
<rect x="1095" y="67" width="3" height="1" fill="#00c000" />
<rect x="1098" y="67" width="1" height="1" fill="#000" />
<rect x="1099" y="67" width="1" height="1" fill="#a8a8a8" />
<rect x="1100" y="67" width="1" height="1" fill="#686868" />
<rect x="1101" y="67" width="1" height="1" fill="#d4d2a8" />
<rect x="1102" y="67" width="1" height="1" fill="#686868" />
<rect x="1103" y="67" width="1" height="1" fill="#d4d2a8" />
<rect x="1104" y="67" width="1" height="1" fill="#000" />
<rect x="1086" y="68" width="1" height="1" fill="#000" />
<rect x="1087" y="68" width="1" height="1" fill="#a8a8a8" />
<rect x="1088" y="68" width="2" height="1" fill="#00c000" />
<rect x="1090" y="68" width="1" height="1" fill="#000" />
<rect x="1091" y="68" width="2" height="1" fill="#00c000" />
<rect x="1093" y="68" width="1" height="1" fill="#000" />
<rect x="1094" y="68" width="2" height="1" fill="#00c000" />
<rect x="1096" y="68" width="1" height="1" fill="#000" />
<rect x="1097" y="68" width="2" height="1" fill="#00c000" />
<rect x="1099" y="68" width="1" height="1" fill="#a8a8a8" />
<rect x="1100" y="68" width="4" height="1" fill="#d4d2a8" />
<rect x="1104" y="68" width="1" height="1" fill="#000" />
<rect x="1086" y="69" width="1" height="1" fill="#000" />
<rect x="1087" y="69" width="1" height="1" fill="#a8a8a8" />
<rect x="1088" y="69" width="1" height="1" fill="#00c000" />
<rect x="1089" y="69" width="3" height="1" fill="#000" />
<rect x="1092" y="69" width="1" height="1" fill="#00c000" />
<rect x="1093" y="69" width="1" height="1" fill="#000" />
<rect x="1094" y="69" width="1" height="1" fill="#00c000" />
<rect x="1095" y="69" width="3" height="1" fill="#000" />
<rect x="1098" y="69" width="1" height="1" fill="#00c000" />
<rect x="1099" y="69" width="1" height="1" fill="#a8a8a8" />
<rect x="1100" y="69" width="1" height="1" fill="#d4d2a8" />
<rect x="1101" y="69" width="2" height="1" fill="#686868" />
<rect x="1103" y="69" width="1" height="1" fill="#d4d2a8" />
<rect x="1104" y="69" width="1" height="1" fill="#000" />
<rect x="1086" y="70" width="1" height="1" fill="#000" />
<rect x="1087" y="70" width="1" height="1" fill="#a8a8a8" />
<rect x="1088" y="70" width="1" height="1" fill="#00c000" />
<rect x="1089" y="70" width="3" height="1" fill="#000" />
<rect x="1092" y="70" width="1" height="1" fill="#00c000" />
<rect x="1093" y="70" width="1" height="1" fill="#000" />
<rect x="1094" y="70" width="1" height="1" fill="#00c000" />
<rect x="1095" y="70" width="3" height="1" fill="#000" />
<rect x="1098" y="70" width="1" height="1" fill="#00c000" />
<rect x="1099" y="70" width="1" height="1" fill="#a8a8a8" />
<rect x="1100" y="70" width="1" height="1" fill="#686868" />
<rect x="1101" y="70" width="2" height="1" fill="#f0c898" />
<rect x="1103" y="70" width="1" height="1" fill="#686868" />
<rect x="1104" y="70" width="1" height="1" fill="#000" />
<rect x="1086" y="71" width="1" height="1" fill="#000" />
<rect x="1087" y="71" width="1" height="1" fill="#a8a8a8" />
<rect x="1088" y="71" width="4" height="1" fill="#000" />
<rect x="1092" y="71" width="3" height="1" fill="#00c000" />
<rect x="1095" y="71" width="4" height="1" fill="#000" />
<rect x="1099" y="71" width="1" height="1" fill="#a8a8a8" />
<rect x="1100" y="71" width="1" height="1" fill="#686868" />
<rect x="1101" y="71" width="2" height="1" fill="#f0c898" />
<rect x="1103" y="71" width="1" height="1" fill="#686868" />
<rect x="1104" y="71" width="1" height="1" fill="#000" />
<rect x="1086" y="72" width="1" height="1" fill="#000" />
<rect x="1087" y="72" width="1" height="1" fill="#a8a8a8" />
<rect x="1088" y="72" width="5" height="1" fill="#000" />
<rect x="1093" y="72" width="1" height="1" fill="#00c000" />
<rect x="1094" y="72" width="5" height="1" fill="#000" />
<rect x="1099" y="72" width="1" height="1" fill="#a8a8a8" />
<rect x="1100" y="72" width="1" height="1" fill="#d4d2a8" />
<rect x="1101" y="72" width="2" height="1" fill="#686868" />
<rect x="1103" y="72" width="1" height="1" fill="#d4d2a8" />
<rect x="1104" y="72" width="1" height="1" fill="#000" />
<rect x="1086" y="73" width="1" height="1" fill="#000" />
<rect x="1087" y="73" width="1" height="1" fill="#a8a8a8" />
<rect x="1088" y="73" width="11" height="1" fill="#000" />
<rect x="1099" y="73" width="1" height="1" fill="#a8a8a8" />
<rect x="1100" y="73" width="4" height="1" fill="#d4d2a8" />
<rect x="1104" y="73" width="1" height="1" fill="#000" />
<rect x="1086" y="74" width="1" height="1" fill="#000" />
<rect x="1087" y="74" width="13" height="1" fill="#a8a8a8" />
<rect x="1100" y="74" width="2" height="1" fill="#d4d2a8" />
<rect x="1102" y="74" width="1" height="1" fill="#909000" />
<rect x="1103" y="74" width="1" height="1" fill="#d4d2a8" />
<rect x="1104" y="74" width="1" height="1" fill="#000" />
<rect x="1086" y="75" width="1" height="1" fill="#000" />
<rect x="1087" y="75" width="1" height="1" fill="#d4d2a8" />
<rect x="1088" y="75" width="1" height="1" fill="#000090" />
<rect x="1089" y="75" width="13" height="1" fill="#d4d2a8" />
<rect x="1102" y="75" width="1" height="1" fill="#909000" />
<rect x="1103" y="75" width="1" height="1" fill="#ffff00" />
<rect x="1104" y="75" width="1" height="1" fill="#909000" />
<rect x="1086" y="76" width="1" height="1" fill="#000" />
<rect x="1087" y="76" width="3" height="1" fill="#000090" />
<rect x="1090" y="76" width="9" height="1" fill="#d4d2a8" />
<rect x="1099" y="76" width="3" height="1" fill="#ff0000" />
<rect x="1102" y="76" width="1" height="1" fill="#909000" />
<rect x="1103" y="76" width="3" height="1" fill="#ffff00" />
<rect x="1106" y="76" width="1" height="1" fill="#909000" />
<rect x="1086" y="77" width="1" height="1" fill="#000" />
<rect x="1087" y="77" width="1" height="1" fill="#d4d2a8" />
<rect x="1088" y="77" width="1" height="1" fill="#000090" />
<rect x="1089" y="77" width="5" height="1" fill="#d4d2a8" />
<rect x="1094" y="77" width="1" height="1" fill="#ff0000" />
<rect x="1095" y="77" width="2" height="1" fill="#d4d2a8" />
<rect x="1097" y="77" width="2" height="1" fill="#ff0000" />
<rect x="1099" y="77" width="3" height="1" fill="#d4d2a8" />
<rect x="1102" y="77" width="1" height="1" fill="#909000" />
<rect x="1103" y="77" width="2" height="1" fill="#ffff00" />
<rect x="1105" y="77" width="1" height="1" fill="#000" />
<rect x="1106" y="77" width="2" height="1" fill="#ffff00" />
<rect x="1108" y="77" width="1" height="1" fill="#909000" />
<rect x="1086" y="78" width="1" height="1" fill="#000" />
<rect x="1087" y="78" width="1" height="1" fill="#d4d2a8" />
<rect x="1088" y="78" width="1" height="1" fill="#000090" />
<rect x="1089" y="78" width="4" height="1" fill="#d4d2a8" />
<rect x="1093" y="78" width="1" height="1" fill="#ff0000" />
<rect x="1094" y="78" width="1" height="1" fill="#d4d2a8" />
<rect x="1095" y="78" width="2" height="1" fill="#ff0000" />
<rect x="1097" y="78" width="5" height="1" fill="#d4d2a8" />
<rect x="1102" y="78" width="1" height="1" fill="#909000" />
<rect x="1103" y="78" width="1" height="1" fill="#ffff00" />
<rect x="1104" y="78" width="3" height="1" fill="#000" />
<rect x="1107" y="78" width="3" height="1" fill="#ffff00" />
<rect x="1110" y="78" width="1" height="1" fill="#909000" />
<rect x="1111" y="78" width="2" height="1" fill="#ff0000" />
<rect x="1086" y="79" width="2" height="1" fill="#000" />
<rect x="1088" y="79" width="1" height="1" fill="#000090" />
<rect x="1089" y="79" width="3" height="1" fill="#000" />
<rect x="1092" y="79" width="1" height="1" fill="#ff0000" />
<rect x="1093" y="79" width="2" height="1" fill="#000" />
<rect x="1095" y="79" width="1" height="1" fill="#ff0000" />
<rect x="1096" y="79" width="6" height="1" fill="#000" />
<rect x="1102" y="79" width="1" height="1" fill="#909000" />
<rect x="1103" y="79" width="2" height="1" fill="#ffff00" />
<rect x="1105" y="79" width="1" height="1" fill="#000" />
<rect x="1106" y="79" width="2" height="1" fill="#ffff00" />
<rect x="1108" y="79" width="1" height="1" fill="#909000" />
<rect x="1088" y="80" width="2" height="1" fill="#000090" />
<rect x="1092" y="80" width="1" height="1" fill="#ff0000" />
<rect x="1094" y="80" width="1" height="1" fill="#ff0000" />
<rect x="1098" y="80" width="4" height="1" fill="#000090" />
<rect x="1102" y="80" width="1" height="1" fill="#909000" />
<rect x="1103" y="80" width="3" height="1" fill="#ffff00" />
<rect x="1106" y="80" width="1" height="1" fill="#909000" />
<rect x="1089" y="81" width="2" height="1" fill="#000090" />
<rect x="1093" y="81" width="1" height="1" fill="#ff0000" />
<rect x="1098" y="81" width="1" height="1" fill="#000090" />
<rect x="1102" y="81" width="1" height="1" fill="#909000" />
<rect x="1103" y="81" width="1" height="1" fill="#ffff00" />
<rect x="1104" y="81" width="1" height="1" fill="#909000" />
<rect x="1091" y="82" width="1" height="1" fill="#000090" />
<rect x="1097" y="82" width="1" height="1" fill="#000090" />
<rect x="1102" y="82" width="1" height="1" fill="#909000" />
<rect x="1092" y="83" width="5" height="1" fill="#000090" />
<rect x="1108" y="83" width="2" height="1" fill="#000" />
<rect x="1107" y="84" width="3" height="1" fill="#000" />
<rect x="1108" y="85" width="2" height="1" fill="#000" />
<rect x="1108" y="86" width="2" height="1" fill="#000" />
<rect x="1108" y="87" width="2" height="1" fill="#000" />
<rect x="1108" y="88" width="2" height="1" fill="#000" />
<rect x="1108" y="89" width="2" height="1" fill="#000" />
<rect x="410" y="36" width="13" height="13" fill="#808080" />
<rect x="411" y="38" width="11" height="9" fill="#000" />
<rect x="411" y="36" width="1" height="1" fill="#e0e0e0" />
<rect x="411" y="48" width="1" height="1" fill="#e0e0e0" />
<rect x="413" y="36" width="1" height="1" fill="#e0e0e0" />
<rect x="413" y="48" width="1" height="1" fill="#e0e0e0" />
<rect x="415" y="36" width="1" height="1" fill="#e0e0e0" />
<rect x="415" y="48" width="1" height="1" fill="#e0e0e0" />
<rect x="417" y="36" width="1" height="1" fill="#e0e0e0" />
<rect x="417" y="48" width="1" height="1" fill="#e0e0e0" />
<rect x="419" y="36" width="1" height="1" fill="#e0e0e0" />
<rect x="419" y="48" width="1" height="1" fill="#e0e0e0" />
<rect x="421" y="36" width="1" height="1" fill="#e0e0e0" />
<rect x="421" y="48" width="1" height="1" fill="#e0e0e0" />
<path d="M412.5,38 L420.5,42.5 L412.5,47 Z" fill="#f8d020" stroke="none" stroke-width="1" shape-rendering="geometricPrecision"/>
<rect x="414" y="42" width="3" height="1" fill="#000" />
<rect x="415" y="41" width="1" height="3" fill="#000" />
<rect x="408" y="40" width="4" height="1" fill="#ff0000" />
<rect x="420" y="42" width="4" height="1" fill="#ff0000" />
<rect x="408" y="44" width="4" height="1" fill="#0000ff" />
<rect x="418" y="39" width="2" height="1" fill="#00a000" />
<rect x="420" y="44" width="2" height="1" fill="#00a000" />
<defs>
<filter id="blur1" x="-20%" y="-50%" width="140%" height="200%"><feGaussianBlur stdDeviation="1.3"/></filter><filter id="blur2" x="-30%" y="-80%" width="160%" height="260%"><feGaussianBlur stdDeviation="1.8"/></filter>
<linearGradient id="ledg" x1="0" y1="0" x2="0.35" y2="1"><stop offset="0" stop-color="#f2f2f2"/><stop offset="0.5" stop-color="#cdcdcd"/><stop offset="1" stop-color="#b8b8b8"/></linearGradient>
<linearGradient id="ledp" x1="0" y1="0" x2="0.35" y2="1"><stop offset="0" stop-color="#8e8e8e"/><stop offset="0.6" stop-color="#a6a6a6"/><stop offset="1" stop-color="#b0b0b0"/></linearGradient>
<linearGradient id="grn" x1="0" y1="0" x2="0.8" y2="1"><stop offset="0" stop-color="#347326"/><stop offset="1" stop-color="#12380a"/></linearGradient>
<linearGradient id="grnp" x1="0" y1="0" x2="0" y2="1"><stop offset="0" stop-color="#7cff3a"/><stop offset="1" stop-color="#3ee01c"/></linearGradient>
</defs>
<text x="143.5" y="215" font-size="11" fill="#000" font-weight="normal" textLength="39" lengthAdjust="spacingAndGlyphs" stroke="#000" stroke-width="0.15" >Boolean</text>
<text x="239.5" y="214" font-size="11" fill="#000" font-weight="normal" textLength="47" lengthAdjust="spacingAndGlyphs" stroke="#000" stroke-width="0.15" >Boolean 2</text>
<text x="330.5" y="215" font-size="11" fill="#000" font-weight="normal" textLength="47.5" lengthAdjust="spacingAndGlyphs" stroke="#000" stroke-width="0.15" >Boolean 3</text>
<g shape-rendering="geometricPrecision">
<ellipse cx="168" cy="235.5" rx="26" ry="11.5" fill="#606060" opacity="0.18" filter="url(#blur2)"/>
<ellipse cx="171" cy="239.0" rx="24" ry="9.5" fill="#404040" opacity="0.5" filter="url(#blur2)"/>
<ellipse cx="168" cy="235.5" rx="23.5" ry="9" fill="url(#ledg)" stroke="#2a2a2a" stroke-width="1"/>
<path d="M174,231.3 Q174,231 174.5,231 H179.5 L180.5,232 L187,235.5 L180.5,239 L179.5,240 H174.5 Q174,240 174,239.7 Z" fill="url(#grn)"/>
</g>
<g shape-rendering="geometricPrecision">
<ellipse cx="264" cy="234.5" rx="26" ry="11.5" fill="#606060" opacity="0.18" filter="url(#blur2)"/>
<ellipse cx="267" cy="238.0" rx="24" ry="9.5" fill="#404040" opacity="0.5" filter="url(#blur2)"/>
<ellipse cx="264" cy="234.5" rx="23.5" ry="9" fill="url(#ledg)" stroke="#2a2a2a" stroke-width="1"/>
<path d="M270,230.3 Q270,230 270.5,230 H275.5 L276.5,231 L283,234.5 L276.5,238 L275.5,239 H270.5 Q270,239 270,238.7 Z" fill="url(#grn)"/>
</g>
<g shape-rendering="geometricPrecision">
<ellipse cx="355" cy="235.5" rx="26" ry="11.5" fill="#606060" opacity="0.18" filter="url(#blur2)"/>
<ellipse cx="358" cy="239.0" rx="24" ry="9.5" fill="#404040" opacity="0.5" filter="url(#blur2)"/>
<ellipse cx="355" cy="235.5" rx="23.5" ry="9" fill="url(#ledg)" stroke="#2a2a2a" stroke-width="1"/>
<path d="M361,231.3 Q361,231 361.5,231 H366.5 L367.5,232 L374,235.5 L367.5,239 L366.5,240 H361.5 Q361,240 361,239.7 Z" fill="url(#grn)"/>
</g>
<text x="138" y="321" font-size="11" fill="#000" font-weight="normal" textLength="67.5" lengthAdjust="spacingAndGlyphs" stroke="#000" stroke-width="0.15" >Radio Buttons</text>
<rect x="137" y="326" width="238" height="1" fill="#a9a9a9" />
<rect x="137" y="326" width="1" height="148" fill="#a9a9a9" />
<rect x="138" y="327" width="236" height="1" fill="#9b9b9b" />
<rect x="138" y="327" width="1" height="146" fill="#9b9b9b" />
<rect x="139" y="328" width="234" height="1" fill="#8f8f8f" />
<rect x="139" y="328" width="1" height="144" fill="#8f8f8f" />
<rect x="140" y="329" width="232" height="1" fill="#8a8a8a" />
<rect x="140" y="329" width="1" height="142" fill="#8a8a8a" />
<rect x="138" y="473" width="236" height="1" fill="#b9b9b9" />
<rect x="374" y="327" width="1" height="147" fill="#b9b9b9" />
<rect x="139" y="472" width="234" height="1" fill="#c3c3c3" />
<rect x="373" y="328" width="1" height="145" fill="#c3c3c3" />
<rect x="140" y="471" width="232" height="1" fill="#c6c6c6" />
<rect x="372" y="329" width="1" height="143" fill="#c6c6c6" />
<rect x="141" y="470" width="230" height="1" fill="#c4c4c4" />
<rect x="371" y="330" width="1" height="141" fill="#c4c4c4" />
<rect x="142" y="469" width="228" height="1" fill="#bdbdbd" />
<rect x="370" y="331" width="1" height="139" fill="#bdbdbd" />
<rect x="141" y="330" width="228" height="1" fill="#bdbdbd" />
<rect x="141" y="330" width="1" height="138" fill="#bdbdbd" />
<text x="162.5" y="346" font-size="11" fill="#000" font-weight="normal" textLength="81" lengthAdjust="spacingAndGlyphs" stroke="#000" stroke-width="0.15" >Radio Selection 1</text>
<text x="162.5" y="388" font-size="11" fill="#000" font-weight="normal" textLength="82" lengthAdjust="spacingAndGlyphs" stroke="#000" stroke-width="0.15" >Radio Selection 2</text>
<text x="163.8" y="431" font-size="11" fill="#000" font-weight="normal" textLength="82" lengthAdjust="spacingAndGlyphs" stroke="#000" stroke-width="0.15" >Radio Selection 3</text>
<g shape-rendering="geometricPrecision">
<ellipse cx="188.5" cy="363.0" rx="24" ry="9.5" fill="#e0e0e0" filter="url(#blur1)"/>
<ellipse cx="186" cy="360.5" rx="24" ry="9.5" fill="#888" opacity="0.6" filter="url(#blur1)"/>
<ellipse cx="187" cy="361.5" rx="23.5" ry="9" fill="url(#ledp)" stroke="#1a1a1a" stroke-width="1.2"/>
<path d="M193,357.3 Q193,357 193.5,357 H198.5 L199.5,358 L206,361.5 L199.5,365 L198.5,366 H193.5 Q193,366 193,365.7 Z" fill="url(#grnp)"/>
</g>
<g shape-rendering="geometricPrecision">
<ellipse cx="187" cy="404.5" rx="26" ry="11.5" fill="#606060" opacity="0.18" filter="url(#blur2)"/>
<ellipse cx="190" cy="408.0" rx="24" ry="9.5" fill="#404040" opacity="0.5" filter="url(#blur2)"/>
<ellipse cx="187" cy="404.5" rx="23.5" ry="9" fill="url(#ledg)" stroke="#2a2a2a" stroke-width="1"/>
<path d="M193,400.3 Q193,400 193.5,400 H198.5 L199.5,401 L206,404.5 L199.5,408 L198.5,409 H193.5 Q193,409 193,408.7 Z" fill="url(#grn)"/>
</g>
<g shape-rendering="geometricPrecision">
<ellipse cx="188" cy="447.5" rx="26" ry="11.5" fill="#606060" opacity="0.18" filter="url(#blur2)"/>
<ellipse cx="191" cy="451.0" rx="24" ry="9.5" fill="#404040" opacity="0.5" filter="url(#blur2)"/>
<ellipse cx="188" cy="447.5" rx="23.5" ry="9" fill="url(#ledg)" stroke="#2a2a2a" stroke-width="1"/>
<path d="M194,443.3 Q194,443 194.5,443 H199.5 L200.5,444 L207,447.5 L200.5,451 L199.5,452 H194.5 Q194,452 194,451.7 Z" fill="url(#grn)"/>
</g>
<defs>
<pattern id="cs" x="0" y="0" width="4" height="4" patternUnits="userSpaceOnUse">
<rect width="4" height="4" fill="#fff"/>
<rect x="1" y="0" width="2" height="1" fill="#000"/>
<rect x="0" y="1" width="1" height="1" fill="#000"/><rect x="2" y="1" width="1" height="1" fill="#000"/>
<rect x="1" y="2" width="1" height="1" fill="#000"/><rect x="3" y="2" width="1" height="1" fill="#000"/>
<rect x="0" y="3" width="1" height="1" fill="#000"/><rect x="3" y="3" width="1" height="1" fill="#000"/>
</pattern>
<pattern id="csv" x="0" y="0" width="4" height="4" patternUnits="userSpaceOnUse">
<rect width="4" height="4" fill="#fff"/>
<rect x="0" y="1" width="1" height="2" fill="#000"/>
<rect x="1" y="0" width="1" height="1" fill="#000"/><rect x="1" y="2" width="1" height="1" fill="#000"/>
<rect x="2" y="1" width="1" height="1" fill="#000"/><rect x="2" y="3" width="1" height="1" fill="#000"/>
<rect x="3" y="0" width="1" height="1" fill="#000"/><rect x="3" y="3" width="1" height="1" fill="#000"/>
</pattern>
</defs>
<rect x="746" y="131" width="307" height="256" fill="#000" />
<rect x="747" y="132" width="305" height="254" fill="url(#cs)" />
<rect x="752" y="137" width="295" height="244" fill="#fff" />
<rect x="749" y="403" width="307" height="256" fill="#000" />
<rect x="750" y="404" width="305" height="254" fill="url(#cs)" />
<rect x="755" y="409" width="295" height="244" fill="#fff" />
<rect x="863" y="131" width="72" height="15" fill="#000" />
<rect x="864" y="132" width="70" height="13" fill="#fff" />
<rect x="871" y="131" width="1" height="15" fill="#000" />
<rect x="926" y="131" width="1" height="15" fill="#000" />
<rect x="864" y="138" width="1" height="1" fill="#000" />
<rect x="865" y="137" width="2" height="3" fill="#000" />
<rect x="867" y="136" width="2" height="5" fill="#000" />
<rect x="869" y="135" width="1" height="7" fill="#000" />
<rect x="927" y="135" width="1" height="7" fill="#000" />
<rect x="928" y="136" width="2" height="5" fill="#000" />
<rect x="930" y="137" width="2" height="3" fill="#000" />
<rect x="932" y="138" width="1" height="1" fill="#000" />
<rect x="917" y="136" width="7" height="1" fill="#000" />
<rect x="918" y="137" width="5" height="1" fill="#000" />
<rect x="919" y="138" width="3" height="1" fill="#000" />
<rect x="920" y="139" width="1" height="1" fill="#000" />
<text x="875" y="143" font-size="11" fill="#000" font-weight="normal" stroke="#000" stroke-width="0.15" >4</text>
<rect x="839" y="403" width="128" height="15" fill="#000" />
<rect x="840" y="404" width="126" height="13" fill="#fff" />
<rect x="847" y="403" width="1" height="15" fill="#000" />
<rect x="957" y="403" width="1" height="15" fill="#000" />
<rect x="840" y="410" width="1" height="1" fill="#000" />
<rect x="841" y="409" width="2" height="3" fill="#000" />
<rect x="843" y="408" width="2" height="5" fill="#000" />
<rect x="845" y="407" width="1" height="7" fill="#000" />
<rect x="958" y="407" width="1" height="7" fill="#000" />
<rect x="959" y="408" width="2" height="5" fill="#000" />
<rect x="961" y="409" width="2" height="3" fill="#000" />
<rect x="963" y="410" width="1" height="1" fill="#000" />
<rect x="948" y="408" width="7" height="1" fill="#000" />
<rect x="949" y="409" width="5" height="1" fill="#000" />
<rect x="950" y="410" width="3" height="1" fill="#000" />
<rect x="951" y="411" width="1" height="1" fill="#000" />
<text x="850.5" y="414" font-size="11" fill="#000" font-weight="normal" textLength="90" lengthAdjust="spacingAndGlyphs" stroke="#000" stroke-width="0.15" >"Radio Selection 2"</text>
<rect x="664" y="235" width="13" height="1" fill="#0000ff" />
<rect x="727" y="235" width="19" height="1" fill="#0000ff" />
<rect x="572" y="544" width="177" height="1" fill="#0000ff" />
<rect x="746" y="229" width="8" height="12" fill="#0000ff" />
<rect x="747" y="230" width="6" height="10" fill="#fcfacc" />
<rect x="749" y="231" width="1" height="1" fill="#0000ff" />
<rect x="750" y="231" width="1" height="1" fill="#0000ff" />
<rect x="748" y="232" width="1" height="1" fill="#0000ff" />
<rect x="751" y="232" width="1" height="1" fill="#0000ff" />
<rect x="751" y="233" width="1" height="1" fill="#0000ff" />
<rect x="750" y="234" width="1" height="1" fill="#0000ff" />
<rect x="749" y="235" width="1" height="1" fill="#0000ff" />
<rect x="749" y="236" width="1" height="1" fill="#0000ff" />
<rect x="749" y="238" width="1" height="1" fill="#0000ff" />
<rect x="749" y="538" width="8" height="12" fill="#0000ff" />
<rect x="750" y="539" width="6" height="10" fill="#fcfacc" />
<rect x="752" y="540" width="1" height="1" fill="#0000ff" />
<rect x="753" y="540" width="1" height="1" fill="#0000ff" />
<rect x="751" y="541" width="1" height="1" fill="#0000ff" />
<rect x="754" y="541" width="1" height="1" fill="#0000ff" />
<rect x="754" y="542" width="1" height="1" fill="#0000ff" />
<rect x="753" y="543" width="1" height="1" fill="#0000ff" />
<rect x="752" y="544" width="1" height="1" fill="#0000ff" />
<rect x="752" y="545" width="1" height="1" fill="#0000ff" />
<rect x="752" y="547" width="1" height="1" fill="#0000ff" />
<rect x="677" y="228" width="50" height="15" fill="#000" />
<rect x="678" y="229" width="48" height="13" fill="#fcfacc" />
<text x="679.5" y="240" font-size="11" fill="#000" font-weight="normal" textLength="44" lengthAdjust="spacingAndGlyphs" stroke="#000" stroke-width="0.15" >0, 1, 2, 4</text>
<rect x="504" y="227" width="1" height="1" fill="#008000" />
<rect x="506" y="227" width="1" height="1" fill="#008000" />
<rect x="508" y="227" width="1" height="1" fill="#008000" />
<rect x="510" y="227" width="1" height="1" fill="#008000" />
<rect x="512" y="227" width="1" height="1" fill="#008000" />
<rect x="514" y="227" width="1" height="1" fill="#008000" />
<rect x="516" y="227" width="1" height="1" fill="#008000" />
<rect x="518" y="227" width="1" height="1" fill="#008000" />
<rect x="520" y="227" width="1" height="1" fill="#008000" />
<rect x="522" y="227" width="1" height="1" fill="#008000" />
<rect x="524" y="227" width="1" height="1" fill="#008000" />
<rect x="526" y="227" width="1" height="1" fill="#008000" />
<rect x="528" y="227" width="1" height="1" fill="#008000" />
<rect x="530" y="227" width="1" height="1" fill="#008000" />
<rect x="532" y="227" width="1" height="1" fill="#008000" />
<rect x="534" y="227" width="1" height="1" fill="#008000" />
<rect x="536" y="227" width="1" height="1" fill="#008000" />
<rect x="538" y="227" width="1" height="1" fill="#008000" />
<rect x="540" y="227" width="1" height="1" fill="#008000" />
<rect x="542" y="227" width="1" height="1" fill="#008000" />
<rect x="544" y="227" width="1" height="1" fill="#008000" />
<rect x="546" y="227" width="1" height="1" fill="#008000" />
<rect x="548" y="227" width="1" height="1" fill="#008000" />
<rect x="550" y="227" width="1" height="1" fill="#008000" />
<rect x="552" y="227" width="1" height="1" fill="#008000" />
<rect x="554" y="227" width="1" height="1" fill="#008000" />
<rect x="556" y="227" width="1" height="1" fill="#008000" />
<rect x="558" y="227" width="1" height="1" fill="#008000" />
<rect x="560" y="227" width="1" height="1" fill="#008000" />
<rect x="562" y="227" width="1" height="1" fill="#008000" />
<rect x="564" y="227" width="1" height="1" fill="#008000" />
<rect x="566" y="227" width="1" height="1" fill="#008000" />
<rect x="568" y="227" width="1" height="1" fill="#008000" />
<rect x="570" y="227" width="1" height="1" fill="#008000" />
<rect x="572" y="227" width="1" height="1" fill="#008000" />
<rect x="574" y="227" width="1" height="1" fill="#008000" />
<rect x="576" y="227" width="1" height="1" fill="#008000" />
<rect x="578" y="227" width="1" height="1" fill="#008000" />
<rect x="580" y="227" width="1" height="1" fill="#008000" />
<rect x="582" y="227" width="1" height="1" fill="#008000" />
<rect x="584" y="227" width="1" height="1" fill="#008000" />
<rect x="586" y="227" width="1" height="1" fill="#008000" />
<rect x="588" y="227" width="1" height="1" fill="#008000" />
<rect x="590" y="227" width="1" height="1" fill="#008000" />
<rect x="504" y="276" width="1" height="1" fill="#008000" />
<rect x="506" y="276" width="1" height="1" fill="#008000" />
<rect x="508" y="276" width="1" height="1" fill="#008000" />
<rect x="510" y="276" width="1" height="1" fill="#008000" />
<rect x="512" y="276" width="1" height="1" fill="#008000" />
<rect x="514" y="276" width="1" height="1" fill="#008000" />
<rect x="516" y="276" width="1" height="1" fill="#008000" />
<rect x="518" y="276" width="1" height="1" fill="#008000" />
<rect x="520" y="276" width="1" height="1" fill="#008000" />
<rect x="522" y="276" width="1" height="1" fill="#008000" />
<rect x="524" y="276" width="1" height="1" fill="#008000" />
<rect x="526" y="276" width="1" height="1" fill="#008000" />
<rect x="528" y="276" width="1" height="1" fill="#008000" />
<rect x="530" y="276" width="1" height="1" fill="#008000" />
<rect x="532" y="276" width="1" height="1" fill="#008000" />
<rect x="534" y="276" width="1" height="1" fill="#008000" />
<rect x="536" y="276" width="1" height="1" fill="#008000" />
<rect x="538" y="276" width="1" height="1" fill="#008000" />
<rect x="540" y="276" width="1" height="1" fill="#008000" />
<rect x="542" y="276" width="1" height="1" fill="#008000" />
<rect x="544" y="276" width="1" height="1" fill="#008000" />
<rect x="546" y="276" width="1" height="1" fill="#008000" />
<rect x="548" y="276" width="1" height="1" fill="#008000" />
<rect x="550" y="276" width="1" height="1" fill="#008000" />
<rect x="550" y="236" width="1" height="1" fill="#008000" />
<rect x="550" y="238" width="1" height="1" fill="#008000" />
<rect x="550" y="240" width="1" height="1" fill="#008000" />
<rect x="550" y="242" width="1" height="1" fill="#008000" />
<rect x="550" y="244" width="1" height="1" fill="#008000" />
<rect x="550" y="246" width="1" height="1" fill="#008000" />
<rect x="550" y="248" width="1" height="1" fill="#008000" />
<rect x="550" y="250" width="1" height="1" fill="#008000" />
<rect x="550" y="252" width="1" height="1" fill="#008000" />
<rect x="550" y="254" width="1" height="1" fill="#008000" />
<rect x="550" y="256" width="1" height="1" fill="#008000" />
<rect x="550" y="258" width="1" height="1" fill="#008000" />
<rect x="550" y="260" width="1" height="1" fill="#008000" />
<rect x="550" y="262" width="1" height="1" fill="#008000" />
<rect x="550" y="264" width="1" height="1" fill="#008000" />
<rect x="550" y="266" width="1" height="1" fill="#008000" />
<rect x="550" y="268" width="1" height="1" fill="#008000" />
<rect x="550" y="270" width="1" height="1" fill="#008000" />
<rect x="550" y="272" width="1" height="1" fill="#008000" />
<rect x="550" y="274" width="1" height="1" fill="#008000" />
<rect x="550" y="276" width="1" height="1" fill="#008000" />
<rect x="550" y="235" width="1" height="1" fill="#008000" />
<rect x="552" y="235" width="1" height="1" fill="#008000" />
<rect x="554" y="235" width="1" height="1" fill="#008000" />
<rect x="556" y="235" width="1" height="1" fill="#008000" />
<rect x="558" y="235" width="1" height="1" fill="#008000" />
<rect x="560" y="235" width="1" height="1" fill="#008000" />
<rect x="562" y="235" width="1" height="1" fill="#008000" />
<rect x="564" y="235" width="1" height="1" fill="#008000" />
<rect x="566" y="235" width="1" height="1" fill="#008000" />
<rect x="568" y="235" width="1" height="1" fill="#008000" />
<rect x="570" y="235" width="1" height="1" fill="#008000" />
<rect x="572" y="235" width="1" height="1" fill="#008000" />
<rect x="574" y="235" width="1" height="1" fill="#008000" />
<rect x="576" y="235" width="1" height="1" fill="#008000" />
<rect x="578" y="235" width="1" height="1" fill="#008000" />
<rect x="580" y="235" width="1" height="1" fill="#008000" />
<rect x="582" y="235" width="1" height="1" fill="#008000" />
<rect x="584" y="235" width="1" height="1" fill="#008000" />
<rect x="586" y="235" width="1" height="1" fill="#008000" />
<rect x="588" y="235" width="1" height="1" fill="#008000" />
<rect x="590" y="235" width="1" height="1" fill="#008000" />
<rect x="504" y="320" width="1" height="1" fill="#008000" />
<rect x="506" y="320" width="1" height="1" fill="#008000" />
<rect x="508" y="320" width="1" height="1" fill="#008000" />
<rect x="510" y="320" width="1" height="1" fill="#008000" />
<rect x="512" y="320" width="1" height="1" fill="#008000" />
<rect x="514" y="320" width="1" height="1" fill="#008000" />
<rect x="516" y="320" width="1" height="1" fill="#008000" />
<rect x="518" y="320" width="1" height="1" fill="#008000" />
<rect x="520" y="320" width="1" height="1" fill="#008000" />
<rect x="522" y="320" width="1" height="1" fill="#008000" />
<rect x="524" y="320" width="1" height="1" fill="#008000" />
<rect x="526" y="320" width="1" height="1" fill="#008000" />
<rect x="528" y="320" width="1" height="1" fill="#008000" />
<rect x="530" y="320" width="1" height="1" fill="#008000" />
<rect x="532" y="320" width="1" height="1" fill="#008000" />
<rect x="534" y="320" width="1" height="1" fill="#008000" />
<rect x="536" y="320" width="1" height="1" fill="#008000" />
<rect x="538" y="320" width="1" height="1" fill="#008000" />
<rect x="540" y="320" width="1" height="1" fill="#008000" />
<rect x="542" y="320" width="1" height="1" fill="#008000" />
<rect x="544" y="320" width="1" height="1" fill="#008000" />
<rect x="546" y="320" width="1" height="1" fill="#008000" />
<rect x="548" y="320" width="1" height="1" fill="#008000" />
<rect x="550" y="320" width="1" height="1" fill="#008000" />
<rect x="552" y="320" width="1" height="1" fill="#008000" />
<rect x="554" y="320" width="1" height="1" fill="#008000" />
<rect x="556" y="320" width="1" height="1" fill="#008000" />
<rect x="558" y="320" width="1" height="1" fill="#008000" />
<rect x="560" y="320" width="1" height="1" fill="#008000" />
<rect x="562" y="320" width="1" height="1" fill="#008000" />
<rect x="564" y="320" width="1" height="1" fill="#008000" />
<rect x="565" y="245" width="1" height="1" fill="#008000" />
<rect x="565" y="247" width="1" height="1" fill="#008000" />
<rect x="565" y="249" width="1" height="1" fill="#008000" />
<rect x="565" y="251" width="1" height="1" fill="#008000" />
<rect x="565" y="253" width="1" height="1" fill="#008000" />
<rect x="565" y="255" width="1" height="1" fill="#008000" />
<rect x="565" y="257" width="1" height="1" fill="#008000" />
<rect x="565" y="259" width="1" height="1" fill="#008000" />
<rect x="565" y="261" width="1" height="1" fill="#008000" />
<rect x="565" y="263" width="1" height="1" fill="#008000" />
<rect x="565" y="265" width="1" height="1" fill="#008000" />
<rect x="565" y="267" width="1" height="1" fill="#008000" />
<rect x="565" y="269" width="1" height="1" fill="#008000" />
<rect x="565" y="271" width="1" height="1" fill="#008000" />
<rect x="565" y="273" width="1" height="1" fill="#008000" />
<rect x="565" y="275" width="1" height="1" fill="#008000" />
<rect x="565" y="277" width="1" height="1" fill="#008000" />
<rect x="565" y="279" width="1" height="1" fill="#008000" />
<rect x="565" y="281" width="1" height="1" fill="#008000" />
<rect x="565" y="283" width="1" height="1" fill="#008000" />
<rect x="565" y="285" width="1" height="1" fill="#008000" />
<rect x="565" y="287" width="1" height="1" fill="#008000" />
<rect x="565" y="289" width="1" height="1" fill="#008000" />
<rect x="565" y="291" width="1" height="1" fill="#008000" />
<rect x="565" y="293" width="1" height="1" fill="#008000" />
<rect x="565" y="295" width="1" height="1" fill="#008000" />
<rect x="565" y="297" width="1" height="1" fill="#008000" />
<rect x="565" y="299" width="1" height="1" fill="#008000" />
<rect x="565" y="301" width="1" height="1" fill="#008000" />
<rect x="565" y="303" width="1" height="1" fill="#008000" />
<rect x="565" y="305" width="1" height="1" fill="#008000" />
<rect x="565" y="307" width="1" height="1" fill="#008000" />
<rect x="565" y="309" width="1" height="1" fill="#008000" />
<rect x="565" y="311" width="1" height="1" fill="#008000" />
<rect x="565" y="313" width="1" height="1" fill="#008000" />
<rect x="565" y="315" width="1" height="1" fill="#008000" />
<rect x="565" y="317" width="1" height="1" fill="#008000" />
<rect x="565" y="319" width="1" height="1" fill="#008000" />
<rect x="565" y="244" width="1" height="1" fill="#008000" />
<rect x="567" y="244" width="1" height="1" fill="#008000" />
<rect x="569" y="244" width="1" height="1" fill="#008000" />
<rect x="571" y="244" width="1" height="1" fill="#008000" />
<rect x="573" y="244" width="1" height="1" fill="#008000" />
<rect x="575" y="244" width="1" height="1" fill="#008000" />
<rect x="577" y="244" width="1" height="1" fill="#008000" />
<rect x="579" y="244" width="1" height="1" fill="#008000" />
<rect x="581" y="244" width="1" height="1" fill="#008000" />
<rect x="583" y="244" width="1" height="1" fill="#008000" />
<rect x="585" y="244" width="1" height="1" fill="#008000" />
<rect x="587" y="244" width="1" height="1" fill="#008000" />
<rect x="589" y="244" width="1" height="1" fill="#008000" />
<rect x="591" y="244" width="1" height="1" fill="#008000" />
<rect x="624" y="235" width="1" height="1" fill="#008000" />
<rect x="625" y="234" width="1" height="1" fill="#008000" />
<rect x="626" y="235" width="1" height="1" fill="#008000" />
<rect x="627" y="234" width="1" height="1" fill="#008000" />
<rect x="628" y="235" width="1" height="1" fill="#008000" />
<rect x="629" y="234" width="1" height="1" fill="#008000" />
<rect x="630" y="235" width="1" height="1" fill="#008000" />
<rect x="631" y="234" width="1" height="1" fill="#008000" />
<rect x="632" y="235" width="1" height="1" fill="#008000" />
<rect x="633" y="234" width="1" height="1" fill="#008000" />
<rect x="634" y="235" width="1" height="1" fill="#008000" />
<rect x="635" y="234" width="1" height="1" fill="#008000" />
<rect x="636" y="235" width="1" height="1" fill="#008000" />
<rect x="637" y="234" width="1" height="1" fill="#008000" />
<rect x="638" y="235" width="1" height="1" fill="#008000" />
<rect x="639" y="234" width="1" height="1" fill="#008000" />
<text x="472.5" y="216" font-size="11" fill="#000" font-weight="normal" textLength="38.5" lengthAdjust="spacingAndGlyphs" stroke="#000" stroke-width="0.15" >Boolean</text>
<rect x="472" y="219" width="32" height="16" fill="#008000" />
<rect x="474" y="221" width="28" height="12" fill="#fff" />
<rect x="475" y="222" width="26" height="10" fill="#008000" />
<rect x="476" y="223" width="24" height="8" fill="#fff" />
<rect x="482" y="224" width="6" height="1" fill="#008000" />
<rect x="484" y="224" width="2" height="6" fill="#008000" />
<rect x="490" y="224" width="6" height="1" fill="#008000" />
<rect x="490" y="224" width="2" height="6" fill="#008000" />
<rect x="490" y="227" width="5" height="1" fill="#008000" />
<rect x="494" y="221" width="9" height="12" fill="#00a000" opacity="0.45"/>
<path d="M499,224 L502.5,227 L499,230 z" fill="#000" stroke="none" stroke-width="1" shape-rendering="geometricPrecision"/>
<text x="473" y="265" font-size="11" fill="#000" font-weight="normal" textLength="47" lengthAdjust="spacingAndGlyphs" stroke="#000" stroke-width="0.15" >Boolean 2</text>
<rect x="472" y="268" width="32" height="16" fill="#008000" />
<rect x="474" y="270" width="28" height="12" fill="#fff" />
<rect x="475" y="271" width="26" height="10" fill="#008000" />
<rect x="476" y="272" width="24" height="8" fill="#fff" />
<rect x="482" y="273" width="6" height="1" fill="#008000" />
<rect x="484" y="273" width="2" height="6" fill="#008000" />
<rect x="490" y="273" width="6" height="1" fill="#008000" />
<rect x="490" y="273" width="2" height="6" fill="#008000" />
<rect x="490" y="276" width="5" height="1" fill="#008000" />
<rect x="494" y="270" width="9" height="12" fill="#00a000" opacity="0.45"/>
<path d="M499,273 L502.5,276 L499,279 z" fill="#000" stroke="none" stroke-width="1" shape-rendering="geometricPrecision"/>
<text x="473" y="309" font-size="11" fill="#000" font-weight="normal" textLength="47" lengthAdjust="spacingAndGlyphs" stroke="#000" stroke-width="0.15" >Boolean 3</text>
<rect x="472" y="312" width="32" height="16" fill="#008000" />
<rect x="474" y="314" width="28" height="12" fill="#fff" />
<rect x="475" y="315" width="26" height="10" fill="#008000" />
<rect x="476" y="316" width="24" height="8" fill="#fff" />
<rect x="482" y="317" width="6" height="1" fill="#008000" />
<rect x="484" y="317" width="2" height="6" fill="#008000" />
<rect x="490" y="317" width="6" height="1" fill="#008000" />
<rect x="490" y="317" width="2" height="6" fill="#008000" />
<rect x="490" y="320" width="5" height="1" fill="#008000" />
<rect x="494" y="314" width="9" height="12" fill="#00a000" opacity="0.45"/>
<path d="M499,317 L502.5,320 L499,323 z" fill="#000" stroke="none" stroke-width="1" shape-rendering="geometricPrecision"/>
<text x="540.5" y="533" font-size="11" fill="#000" font-weight="normal" textLength="67.5" lengthAdjust="spacingAndGlyphs" stroke="#000" stroke-width="0.15" >Radio Buttons</text>
<rect x="540" y="536" width="32" height="16" fill="#0000ff" />
<rect x="542" y="538" width="28" height="12" fill="#fff" />
<rect x="543" y="539" width="26" height="10" fill="#0000ff" />
<rect x="544" y="540" width="24" height="8" fill="#fff" />
<path d="M555,541 L552,544 L555,547 z" fill="#0000ff" stroke="none" stroke-width="1" shape-rendering="geometricPrecision"/>
<path d="M557,541 L560,544 L557,547 z" fill="#0000ff" stroke="none" stroke-width="1" shape-rendering="geometricPrecision"/>
<rect x="562" y="538" width="9" height="12" fill="#4040ff" opacity="0.45"/>
<path d="M567,541 L570.5,544 L567,547 z" fill="#000" stroke="none" stroke-width="1" shape-rendering="geometricPrecision"/>
<rect x="592" y="223" width="32" height="25" fill="#000" />
<rect x="593" y="224" width="30" height="23" fill="#fcfacc" />
<rect x="595" y="225" width="5" height="5" fill="#000" />
<rect x="596" y="226" width="3" height="3" fill="#fcfacc" />
<rect x="601" y="227" width="1" height="1" fill="#000" />
<rect x="603" y="227" width="1" height="1" fill="#000" />
<rect x="605" y="227" width="3" height="1" fill="#000" />
<rect x="606" y="226" width="1" height="3" fill="#000" />
<rect x="595" y="233" width="5" height="5" fill="#000" />
<rect x="596" y="234" width="3" height="3" fill="#fcfacc" />
<rect x="601" y="235" width="1" height="1" fill="#000" />
<rect x="603" y="235" width="1" height="1" fill="#000" />
<rect x="605" y="235" width="3" height="1" fill="#000" />
<rect x="606" y="234" width="1" height="3" fill="#000" />
<rect x="595" y="241" width="5" height="5" fill="#000" />
<rect x="596" y="242" width="3" height="3" fill="#fcfacc" />
<rect x="601" y="243" width="1" height="1" fill="#000" />
<rect x="603" y="243" width="1" height="1" fill="#000" />
<rect x="605" y="243" width="3" height="1" fill="#000" />
<rect x="606" y="242" width="1" height="3" fill="#000" />
<rect x="609" y="226" width="1" height="19" fill="#000" />
<rect x="610" y="225" width="1" height="1" fill="#000" />
<rect x="610" y="245" width="1" height="1" fill="#000" />
<rect x="612" y="225" width="9" height="21" fill="#000" />
<rect x="613" y="226" width="3" height="3" fill="#fcfacc" />
<rect x="617" y="226" width="3" height="3" fill="#fcfacc" />
<rect x="613" y="230" width="3" height="3" fill="#fcfacc" />
<rect x="617" y="230" width="3" height="3" fill="#fcfacc" />
<rect x="613" y="234" width="3" height="3" fill="#fcfacc" />
<rect x="617" y="234" width="3" height="3" fill="#fcfacc" />
<rect x="613" y="238" width="3" height="3" fill="#fcfacc" />
<rect x="617" y="238" width="3" height="3" fill="#fcfacc" />
<rect x="613" y="242" width="3" height="3" fill="#fcfacc" />
<rect x="617" y="242" width="3" height="3" fill="#fcfacc" />
<path d="M638,230 H661 L663,232 V238 L661,240 H638 L640,237 V233 z" fill="#fcfacc" stroke="#000" stroke-width="1" transform="translate(0.5,0.5)" shape-rendering="geometricPrecision"/>
<rect x="642" y="232" width="2" height="6" fill="#000" />
<rect x="644" y="232" width="1" height="1" fill="#000" />
<rect x="644" y="237" width="1" height="1" fill="#000" />
<rect x="645" y="234" width="2" height="2" fill="#000" />
<rect x="648" y="234" width="2" height="2" fill="#000" />
<rect x="651" y="234" width="2" height="2" fill="#000" />
<rect x="654" y="232" width="2" height="6" fill="#000" />
<rect x="653" y="232" width="1" height="1" fill="#000" />
<rect x="653" y="237" width="1" height="1" fill="#000" />
<rect x="658" y="233" width="1" height="6" fill="#000" />
<rect x="660" y="233" width="1" height="6" fill="#000" />
<rect x="657" y="234" width="5" height="1" fill="#000" />
<rect x="657" y="237" width="5" height="1" fill="#000" />
</svg>
</body></html>
